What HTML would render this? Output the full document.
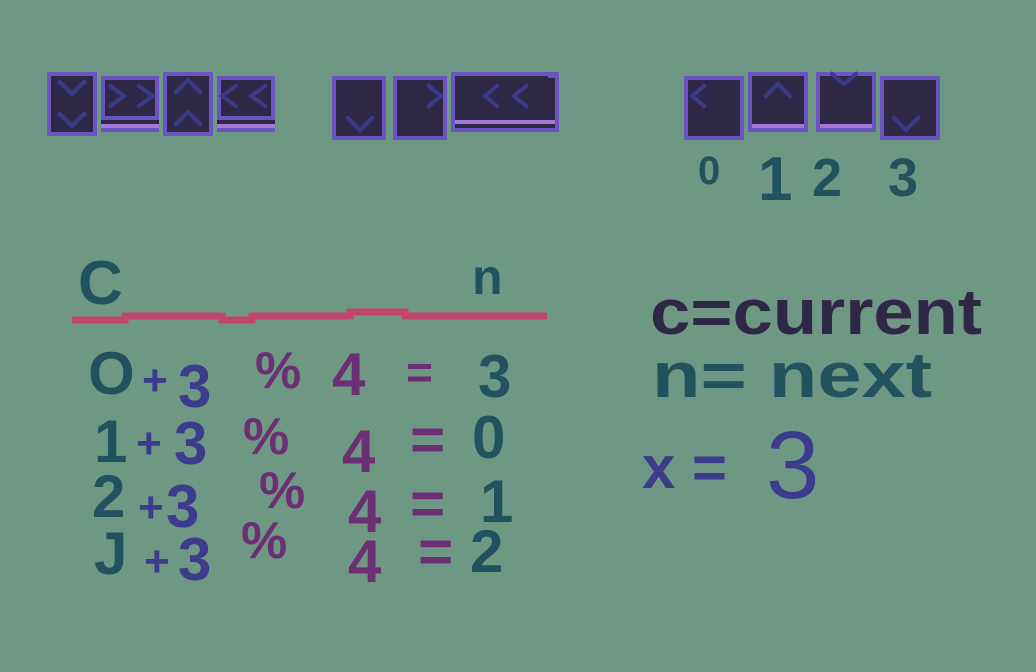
<!DOCTYPE html>
<html><head><style>
html,body{margin:0;padding:0;background:#6e9884;}
svg{display:block}
text{font-family:"Liberation Sans",sans-serif;}
</style></head><body>
<svg width="1036" height="672" viewBox="0 0 1036 672" xmlns="http://www.w3.org/2000/svg">
<rect width="1036" height="672" fill="#6e9884"/>
<g stroke="#6a55c0" stroke-width="4" fill="#2e2846">
<rect x="49" y="74" width="46" height="60"/>
<rect x="165" y="74" width="46" height="60"/>
<rect x="103" y="78" width="54" height="40"/>
<rect x="219" y="78" width="54" height="40"/>
<rect x="334" y="78" width="50" height="60"/>
<rect x="395" y="78" width="50" height="60"/>
<rect x="453" y="74" width="104" height="56"/>
<rect x="686" y="78" width="56" height="60"/>
<rect x="750" y="74" width="56" height="56"/>
<rect x="818" y="74" width="56" height="56"/>
<rect x="882" y="78" width="56" height="60"/>
</g>
<g>
<rect x="101" y="120" width="58" height="4" fill="#2e2846"/><rect x="101" y="124" width="58" height="4" fill="#a877d8"/><rect x="101" y="128" width="58" height="4" fill="#6a55c0"/>
<rect x="217" y="120" width="58" height="4" fill="#2e2846"/><rect x="217" y="124" width="58" height="4" fill="#a877d8"/><rect x="217" y="128" width="58" height="4" fill="#6a55c0"/>
<rect x="455" y="120" width="100" height="4" fill="#a877d8"/>
<rect x="752" y="124" width="52" height="4" fill="#a877d8"/>
<rect x="820" y="124" width="52" height="4" fill="#a877d8"/>
<rect x="548" y="72" width="8" height="6" fill="#6a55c0"/>
</g>
<g stroke="#3a3a8a" stroke-width="4" fill="none" stroke-linecap="square">
<polyline points="60,82 72,94 84,82"/><polyline points="60,114 72,126 84,114"/>
<polyline points="110,86 124,96 110,106"/><polyline points="139,86 153,96 139,106"/>
<polyline points="176,92 188,80 200,92"/><polyline points="176,124 188,112 200,124"/>
<polyline points="236,86 222,96 236,106"/><polyline points="265,86 251,96 265,106"/>
<polyline points="348,118 360,130 372,118"/>
<polyline points="429,86 441,96 429,106"/>
<polyline points="497,86 485,96 497,106"/><polyline points="526,86 514,96 526,106"/>
<polyline points="704,86 692,96 704,106"/>
<polyline points="766,96 778,84 790,96"/>
<polyline points="832,74 844,84 856,74"/>
<polyline points="894,118 906,130 918,118"/>
</g>
<g fill="#22525e" font-weight="bold">
<text x="698" y="184" font-size="40">0</text>
<text x="758" y="200" font-size="62">1</text>
<text x="812" y="196" font-size="54">2</text>
<text x="888" y="196" font-size="54">3</text>
<text x="78" y="304" font-size="62">C</text>
<text x="472" y="294" font-size="50">n</text>
</g>
<polyline points="72,320 125,320 125,316 222,316 222,320 252,320 252,316 350,316 350,312 405,312 405,316 547,316" stroke="#c0446e" stroke-width="7" fill="none"/>
<g font-size="60" font-weight="bold">
<text x="88" y="394" fill="#22525e">O</text>
<text x="142" y="395" fill="#3c3c8c" font-size="44">+</text>
<text x="178" y="407" fill="#3c3c8c">3</text>
<text x="255" y="388" fill="#6c2f74" font-size="52">%</text>
<text x="332" y="395" fill="#6c2f74">4</text>
<text x="406" y="388" fill="#6c2f74" font-size="46">=</text>
<text x="478" y="397" fill="#22525e">3</text>

<text x="94" y="462" fill="#22525e">1</text>
<text x="136" y="458" fill="#3c3c8c" font-size="44">+</text>
<text x="174" y="464" fill="#3c3c8c">3</text>
<text x="243" y="454" fill="#6c2f74" font-size="52">%</text>
<text x="342" y="472" fill="#6c2f74">4</text>
<text x="410" y="460" fill="#6c2f74">=</text>
<text x="472" y="458" fill="#22525e">0</text>

<text x="92" y="517" fill="#22525e">2</text>
<text x="138" y="522" fill="#3c3c8c" font-size="44">+</text>
<text x="166" y="527" fill="#3c3c8c">3</text>
<text x="259" y="508" fill="#6c2f74" font-size="52">%</text>
<text x="348" y="532" fill="#6c2f74">4</text>
<text x="410" y="524" fill="#6c2f74">=</text>
<text x="480" y="522" fill="#22525e">1</text>

<text x="94" y="574" fill="#22525e">J</text>
<text x="144" y="576" fill="#3c3c8c" font-size="44">+</text>
<text x="178" y="580" fill="#3c3c8c">3</text>
<text x="241" y="558" fill="#6c2f74" font-size="52">%</text>
<text x="348" y="582" fill="#6c2f74">4</text>
<text x="418" y="572" fill="#6c2f74">=</text>
<text x="470" y="572" fill="#22525e">2</text>
</g>
<g font-weight="bold">
<text x="650" y="334" font-size="64" fill="#2e2846" textLength="332" lengthAdjust="spacingAndGlyphs">c=current</text>
<text x="652" y="397" font-size="64" fill="#22525e" textLength="280" lengthAdjust="spacingAndGlyphs">n= next</text>
<text x="642" y="488" font-size="60" fill="#3c3c8c">x =</text>
<text x="766" y="498" font-size="96" fill="#3c3c8c" font-weight="normal">3</text>
</g>
</svg>
</body></html>
